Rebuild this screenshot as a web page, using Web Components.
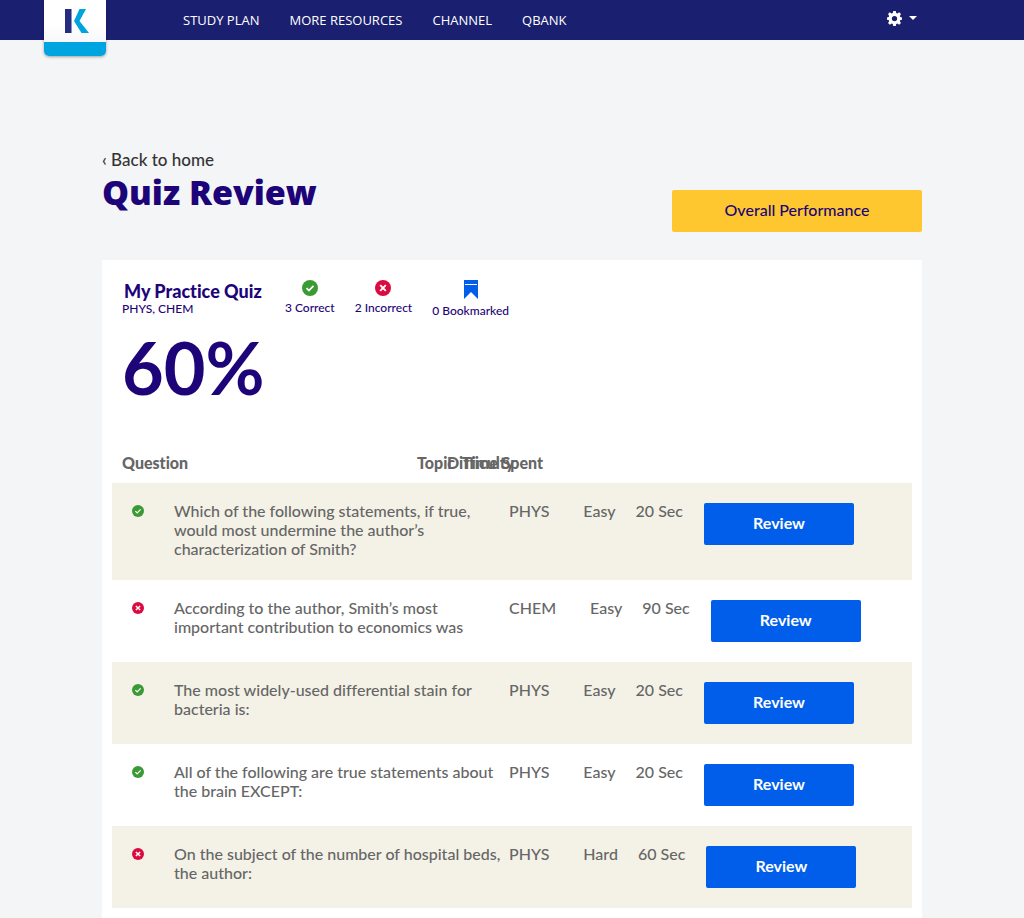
<!DOCTYPE html>
<html lang="en">
<head>
<meta charset="utf-8">
<title>Quiz Review</title>
<style>
body { margin: 0; background: #f3f5f7; font-family: Lato, "Liberation Sans", sans-serif; font-size: 16px; line-height: 19px; font-weight: 500; font-variant-ligatures: none; color: #666; }
main { max-width: 820px; margin: 0 auto; padding-top: 110px; }
</style>
</head>
<body>
<site-header>
  <a href="#">STUDY PLAN</a>
  <a href="#">MORE RESOURCES</a>
  <a href="#">CHANNEL</a>
  <a href="#">QBANK</a>
</site-header>
<main>
  <page-heading heading="Quiz Review">
    <a slot="back" href="#">‹ Back to home</a>
    <action-button slot="action" kind="wide">Overall Performance</action-button>
  </page-heading>
  <quiz-card>
    <quiz-summary heading="My Practice Quiz" topics="PHYS, CHEM" score="60%">
      <stat-item icon="correct">3 Correct</stat-item>
      <stat-item icon="incorrect">2 Incorrect</stat-item>
      <stat-item icon="bookmark">0 Bookmarked</stat-item>
    </quiz-summary>
    <question-table></question-table>
  </quiz-card>
</main>
<script>
class BaseElement extends HTMLElement {
  connectedCallback() {
    if (this.shadowRoot) return;
    const template = document.createElement('template');
    template.innerHTML = this.render();
    this.attachShadow({ mode: 'open' }).append(template.content.cloneNode(true));
  }
  attr(name) { return this.getAttribute(name) || ''; }
}

customElements.define('site-logo', class extends BaseElement {
  render() {
    return `<style>
      :host { display: block; align-self: flex-start; }
      a { display: flex; justify-content: center; box-sizing: border-box; width: 62px; height: 56px; padding-top: 9px;
        background: linear-gradient(#fff 0 24px, #f8f8fa 42px, #00a4e0 42px);
        border-radius: 0 0 5px 5px; box-shadow: 0 1px 3px rgba(0,0,0,.35); }
      svg { display: block; margin-left: 4px; }
    </style>
    <a href="#" aria-label="Home"><svg width="24" height="24" viewBox="0 0 24 24">
      <path fill="#252d80" d="M0 0h6v24H0z"/><path fill="#8c91c0" d="M6 0h1v24H6z"/>
      <path fill="#00a4dc" d="M14.500 0H21l-6.500 12L24 24h-7.500L9 12z"/></svg></a>`;
  }
});

customElements.define('site-header', class extends BaseElement {
  render() {
    return `<style>
      :host { display: block; background: #1b1f70; height: 40px; }
      header { display: flex; align-items: center; height: 40px; padding: 0 107px 0 44px; }
      nav { display: flex; gap: 30px; margin-left: 77px; font: 500 13px/20px "Open Sans", sans-serif; }
      ::slotted(a) { color: #fff; text-decoration: none; white-space: nowrap; }
      button { display: flex; align-items: center; gap: 7px; margin: 0 0 4px auto; padding: 0; border: 0; background: none; color: #fff; }
    </style>
    <header><site-logo></site-logo><nav><slot></slot></nav>
    <button type="button" aria-label="Settings">
      <svg width="15" height="15" viewBox="0 0 16 16" fill="currentColor"><path fill-rule="evenodd" d="M6.600 0h2.800l.4 2.200 1.300.5L13 1.400l1.900 1.900-1.200 1.900.5 1.300 1.800.3v2.400l-1.800.4-.5 1.300 1.200 1.900-1.900 1.900-1.900-1.300-1.300.5-.4 2.100H6.600l-.4-2.100-1.300-.5L3 14.700l-1.900-1.900 1.200-1.900-.5-1.300L0 9.200V6.800l1.800-.3.5-1.300-1.200-1.900L3 1.400l1.900 1.300 1.300-.5zM8 5.200a2.800 2.800 0 1 0 0 5.600 2.800 2.800 0 0 0 0-5.600z"/></svg>
      <svg width="8" height="4" viewBox="0 0 8 4" fill="currentColor"><path d="M0 0h8L4 4z"/></svg>
    </button></header>`;
  }
});

customElements.define('action-button', class extends BaseElement {
  render() {
    return `<style>
      :host { display: block; flex: none; }
      button { display: block; width: 150px; height: 42px; padding: 0 0 2px; border: 0; border-radius: 2px;
        background: #005eea; color: #fff; font: 700 16px/20px Lato, sans-serif; }
      :host([kind="wide"]) button { width: 250px; background: #ffc72f; color: #1c0578; font-weight: 500; }
    </style><button type="button"><slot></slot></button>`;
  }
});

customElements.define('page-heading', class extends BaseElement {
  render() {
    return `<style>
      :host { display: flex; justify-content: space-between; align-items: flex-end; padding-bottom: 28px; }
      .titles { margin-bottom: 18px; }
      h1 { margin: 1px 0 0; font: 800 34px/44px "Open Sans", sans-serif; color: #1d0478; }
      ::slotted(a) { display: block; color: #333; text-decoration: none; font-size: 17px; }
    </style>
    <div class="titles"><slot name="back"></slot><h1>${this.attr('heading')}</h1></div>
    <slot name="action"></slot>`;
  }
});

customElements.define('status-icon', class extends BaseElement {
  render() {
    const kind = this.attr('kind'), size = this.attr('size') || 16;
    const art = {
      correct: '<circle cx="8" cy="8" r="8" fill="#3a9b35"/><path d="M4.500 8.200l2.400 2.300 4.600-4.700" fill="none" stroke="#fff" stroke-width="1.700"/>',
      incorrect: '<circle cx="8" cy="8" r="8" fill="#db0a40"/><path d="M5.200 5.200l5.600 5.600M10.800 5.200l-5.600 5.600" fill="none" stroke="#fff" stroke-width="1.900"/>',
      bookmark: '<path d="M0 0h14v19l-7-7-7 7z" fill="#005eea"/><path d="M1 4.500h12" stroke="#fff"/>'
    };
    const box = kind === 'bookmark' ? 'width="14" height="19" viewBox="0 0 14 19"' : `width="${size}" height="${size}" viewBox="0 0 16 16"`;
    return `<style>:host { display: block; } svg { display: block; margin: 0 auto; }</style><svg ${box} aria-hidden="true">${art[kind]}</svg>`;
  }
});

customElements.define('stat-item', class extends BaseElement {
  render() {
    return `<style>
      :host { display: flex; flex-direction: column; align-items: center; gap: 5px; font-size: 12px; line-height: 14px; white-space: nowrap; }
    </style><status-icon kind="${this.attr('icon')}"></status-icon><span><slot></slot></span>`;
  }
});

customElements.define('quiz-card', class extends BaseElement {
  render() {
    return `<style>:host { display: block; background: #fff; padding: 20px 10px 10px; }</style><slot></slot>`;
  }
});

customElements.define('quiz-summary', class extends BaseElement {
  render() {
    return `<style>
      :host { display: block; padding: 0 10px; color: #1d0478; }
      .top { display: flex; align-items: flex-start; gap: 20px; }
      h2 { margin: 0 0 0 2px; font-size: 18px; line-height: 22px; font-weight: 900; white-space: nowrap; }
      p { margin: 0; font-size: 12px; line-height: 14px; }
      .name { width: 143px; }
      .score { font-size: 72px; line-height: 84px; font-weight: 700; margin-top: 7px; }
    </style>
    <div class="top"><div class="name"><h2>${this.attr('heading')}</h2><p>${this.attr('topics')}</p></div><slot></slot></div>
    <div class="score">${this.attr('score')}</div>`;
  }
});

const questions = [
  ['correct', 'Which of the following statements, if true, would most undermine the author’s characterization of Smith?', 'PHYS', 'Easy', '20 Sec'],
  ['incorrect', 'According to the author, Smith’s most important contribution to economics was', 'CHEM', 'Easy', '90 Sec'],
  ['correct', 'The most widely-used differential stain for bacteria is:', 'PHYS', 'Easy', '20 Sec'],
  ['correct', 'All of the following are true statements about the brain EXCEPT:', 'PHYS', 'Easy', '20 Sec'],
  ['incorrect', 'On the subject of the number of hospital beds, the author:', 'PHYS', 'Hard', '60 Sec']
];

customElements.define('question-table', class extends BaseElement {
  render() {
    const rows = questions.map(([kind, text, topic, level, time]) => `<tr>
      <td class="mark"><status-icon kind="${kind}" size="12"></status-icon></td>
      <td class="text">${text}</td><td class="topic">${topic}</td><td class="level">${level}</td>
      <td class="time">${time}</td><td class="action"><action-button>Review</action-button></td></tr>`).join('');
    return `<style>
      :host { display: block; margin-top: 44px; }
      table, thead, tbody { display: block; }
      tr { display: flex; align-items: flex-start; }
      th, td { padding: 0; text-align: left; white-space: nowrap; }
      thead tr { padding: 0 10px 11px; }
      th { width: 15px; font-weight: 900; }
      th.question { width: 295px; }
      th.topic { width: 30px; }
      tbody tr { padding: 18px 20px 20px; }
      tbody tr:nth-child(odd) { background: #f4f2e6; }
      td.mark { width: 42px; padding-top: 4px; }
      td.mark status-icon { width: 12px; }
      td.text { width: 335px; padding-bottom: 2px; white-space: normal; }
      td.topic { padding-right: 34px; }
      td.level { padding-right: 20px; }
      td.time { padding-right: 21px; }
      td.action { padding-top: 2px; }
    </style>
    <table><thead><tr><th class="question">Question</th><th class="topic">Topic</th><th>Difficulty</th><th>Time Spent</th></tr></thead>
    <tbody>${rows}</tbody></table>`;
  }
});
</script>
</body>
</html>
